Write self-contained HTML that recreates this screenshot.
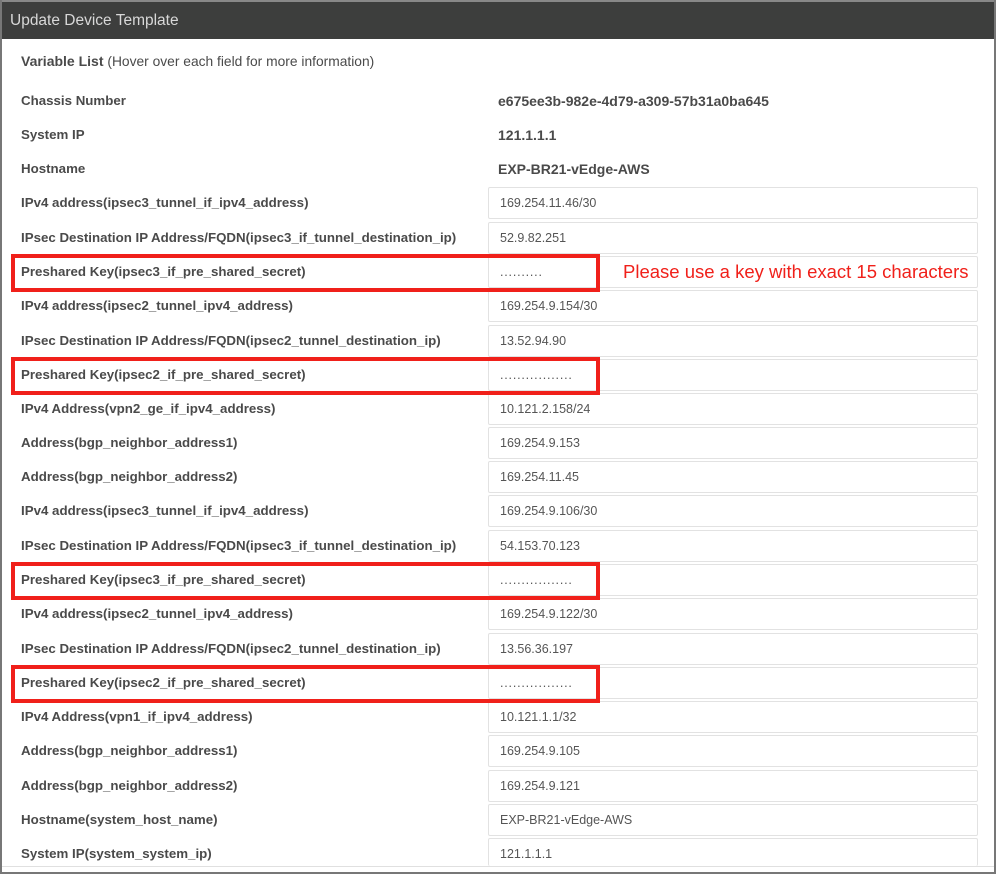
<!DOCTYPE html>
<html><head><meta charset="utf-8"><style>
*{margin:0;padding:0;box-sizing:border-box}
body{width:996px;height:874px;background:#fff;position:relative;overflow:hidden;font-family:"Liberation Sans",sans-serif}
.frame{position:absolute;left:0;top:0;width:996px;height:874px;border:2px solid #777;border-top:none}
.hdr{position:absolute;left:0;top:0;width:996px;height:39px;background:#3d3e3d;border-top:2px solid #888;color:#d8d8d8;font-size:15.5px;line-height:37px;padding-left:10px}
.t{position:absolute;left:21px;font-size:13.3px;font-weight:bold;color:#4a4a4a;height:32px;line-height:32px;white-space:nowrap}
.v{position:absolute;left:498px;font-size:14px;font-weight:bold;color:#4a4a4a;height:32px;line-height:32px}
.i{position:absolute;left:488px;width:490px;height:32px;border:1px solid #e2e2e2;border-radius:2px;font-size:12.5px;color:#555;line-height:30px;padding-left:11px}
.r{position:absolute;left:11px;width:589px;height:38px;border:4px solid #f0201a}
.note{position:absolute;left:623px;top:261px;font-size:18.5px;color:#f0201a}
.bot{position:absolute;left:2px;top:866px;width:992px;height:1px;background:#e0e0e0}
.d{letter-spacing:0.8px}
</style></head><body>
<div class="hdr">Update Device Template</div>
<div class="t" style="top:45px;font-size:14px">Variable List <span style="font-weight:normal;font-size:13.8px">(Hover over each field for more information)</span></div>
<div class="t" style="top:85px">Chassis Number</div><div class="v" style="top:85px">e675ee3b-982e-4d79-a309-57b31a0ba645</div>
<div class="t" style="top:119px">System IP</div><div class="v" style="top:119px">121.1.1.1</div>
<div class="t" style="top:153px">Hostname</div><div class="v" style="top:153px">EXP-BR21-vEdge-AWS</div>

<div class="t" style="top:187px">IPv4 address(ipsec3_tunnel_if_ipv4_address)</div><div class="i" style="top:187px">169.254.11.46/30</div>
<div class="t" style="top:222px">IPsec Destination IP Address/FQDN(ipsec3_if_tunnel_destination_ip)</div><div class="i" style="top:222px">52.9.82.251</div>
<div class="t" style="top:256px">Preshared Key(ipsec3_if_pre_shared_secret)</div><div class="i d" style="top:256px">..........</div>
<div class="t" style="top:290px">IPv4 address(ipsec2_tunnel_ipv4_address)</div><div class="i" style="top:290px">169.254.9.154/30</div>
<div class="t" style="top:325px">IPsec Destination IP Address/FQDN(ipsec2_tunnel_destination_ip)</div><div class="i" style="top:325px">13.52.94.90</div>
<div class="t" style="top:359px">Preshared Key(ipsec2_if_pre_shared_secret)</div><div class="i d" style="top:359px">.................</div>
<div class="t" style="top:393px">IPv4 Address(vpn2_ge_if_ipv4_address)</div><div class="i" style="top:393px">10.121.2.158/24</div>
<div class="t" style="top:427px">Address(bgp_neighbor_address1)</div><div class="i" style="top:427px">169.254.9.153</div>
<div class="t" style="top:461px">Address(bgp_neighbor_address2)</div><div class="i" style="top:461px">169.254.11.45</div>
<div class="t" style="top:495px">IPv4 address(ipsec3_tunnel_if_ipv4_address)</div><div class="i" style="top:495px">169.254.9.106/30</div>
<div class="t" style="top:530px">IPsec Destination IP Address/FQDN(ipsec3_if_tunnel_destination_ip)</div><div class="i" style="top:530px">54.153.70.123</div>
<div class="t" style="top:564px">Preshared Key(ipsec3_if_pre_shared_secret)</div><div class="i d" style="top:564px">.................</div>
<div class="t" style="top:598px">IPv4 address(ipsec2_tunnel_ipv4_address)</div><div class="i" style="top:598px">169.254.9.122/30</div>
<div class="t" style="top:633px">IPsec Destination IP Address/FQDN(ipsec2_tunnel_destination_ip)</div><div class="i" style="top:633px">13.56.36.197</div>
<div class="t" style="top:667px">Preshared Key(ipsec2_if_pre_shared_secret)</div><div class="i d" style="top:667px">.................</div>
<div class="t" style="top:701px">IPv4 Address(vpn1_if_ipv4_address)</div><div class="i" style="top:701px">10.121.1.1/32</div>
<div class="t" style="top:735px">Address(bgp_neighbor_address1)</div><div class="i" style="top:735px">169.254.9.105</div>
<div class="t" style="top:770px">Address(bgp_neighbor_address2)</div><div class="i" style="top:770px">169.254.9.121</div>
<div class="t" style="top:804px">Hostname(system_host_name)</div><div class="i" style="top:804px">EXP-BR21-vEdge-AWS</div>
<div class="t" style="top:838px;height:28px;overflow:hidden">System IP(system_system_ip)</div><div class="i" style="top:838px;height:28px;border-bottom:none;overflow:hidden">121.1.1.1</div>

<div class="r" style="top:254px"></div>
<div class="r" style="top:357px"></div>
<div class="r" style="top:562px"></div>
<div class="r" style="top:665px"></div>
<div class="note">Please use a key with exact 15 characters</div>
<div class="bot"></div>
<div class="frame"></div>
</body></html>
